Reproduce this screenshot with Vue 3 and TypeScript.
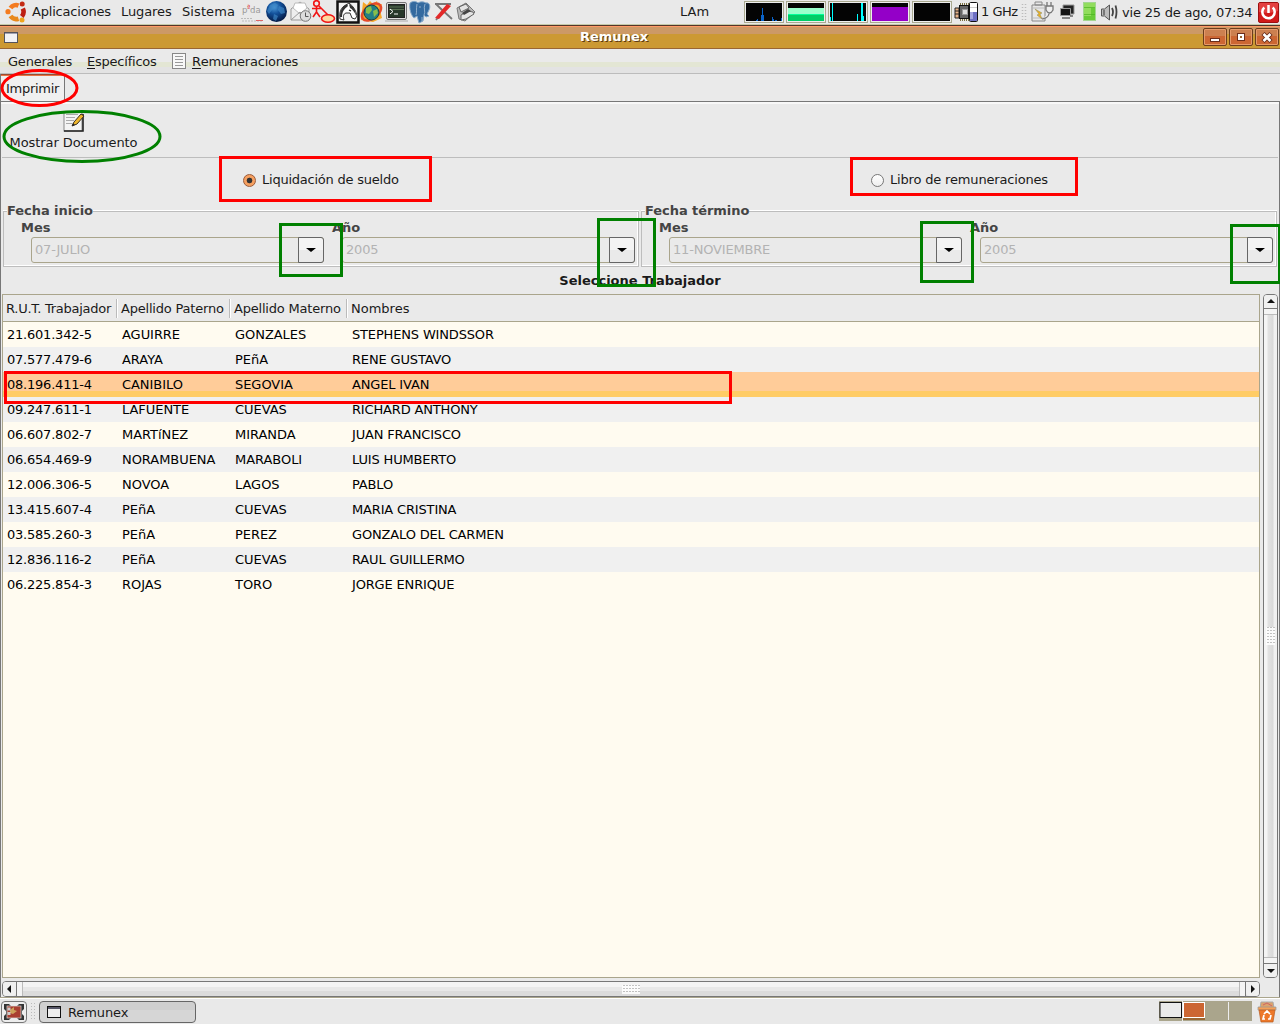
<script setup lang="ts">
interface Worker {
  rut: string
  paterno: string
  materno: string
  nombres: string
}

const workers: Worker[] = [
  { rut: '21.601.342-5', paterno: 'AGUIRRE', materno: 'GONZALES', nombres: 'STEPHENS WINDSSOR' },
  { rut: '07.577.479-6', paterno: 'ARAYA', materno: 'PEñA', nombres: 'RENE GUSTAVO' },
  { rut: '08.196.411-4', paterno: 'CANIBILO', materno: 'SEGOVIA', nombres: 'ANGEL IVAN' },
  { rut: '09.247.611-1', paterno: 'LAFUENTE', materno: 'CUEVAS', nombres: 'RICHARD ANTHONY' },
  { rut: '06.607.802-7', paterno: 'MARTíNEZ', materno: 'MIRANDA', nombres: 'JUAN FRANCISCO' },
  { rut: '06.654.469-9', paterno: 'NORAMBUENA', materno: 'MARABOLI', nombres: 'LUIS HUMBERTO' },
  { rut: '12.006.306-5', paterno: 'NOVOA', materno: 'LAGOS', nombres: 'PABLO' },
  { rut: '13.415.607-4', paterno: 'PEñA', materno: 'CUEVAS', nombres: 'MARIA CRISTINA' },
  { rut: '03.585.260-3', paterno: 'PEñA', materno: 'PEREZ', nombres: 'GONZALO DEL CARMEN' },
  { rut: '12.836.116-2', paterno: 'PEñA', materno: 'CUEVAS', nombres: 'RAUL GUILLERMO' },
  { rut: '06.225.854-3', paterno: 'ROJAS', materno: 'TORO', nombres: 'JORGE ENRIQUE' },
]

const selectedRut = '08.196.411-4'

const periods = [
  { title: 'Fecha inicio', month: '07-JULIO', year: '2005' },
  { title: 'Fecha término', month: '11-NOVIEMBRE', year: '2005' },
]
</script>

<template>
  <div class="desktop">
    <header class="panel top-panel">
      <svg class="ubuntu" width="22" height="24" viewBox="0 0 22 24">
        <g fill="none" stroke-width="4.600">
          <path d="M5.500 8A6.800 6.800 0 0 1 13.500 5.600" stroke="#f47b20" />
          <path d="M17.800 8.500A7.500 7.500 0 0 1 16.800 16.500" stroke="#bd2013" />
          <path d="M13.500 18.700A7.200 7.200 0 0 1 5.500 16" stroke="#e8891c" />
        </g>
        <circle cx="3" cy="11.700" r="2.600" fill="#f47b20" />
        <circle cx="17.200" cy="4" r="2.500" fill="#c42b14" />
        <circle cx="17" cy="20" r="2.500" fill="#eea51d" />
      </svg>
      <span class="m-app">Aplicaciones</span>
      <span class="m-lug">Lugares</span>
      <span class="m-sis">Sistema</span>
      <svg class="launchers" width="240" height="24" viewBox="240 0 240 24">
        <defs>
          <radialGradient id="globe" cx=".4" cy=".3" r=".7">
            <stop offset="0" stop-color="#4d9ad8" /><stop offset=".45" stop-color="#12509a" /><stop offset="1" stop-color="#051b46" />
          </radialGradient>
        </defs>
        <text x="242" y="13" font-size="8.500" fill="#999">p</text>
        <text x="247" y="10" font-size="7" fill="#d33">ª</text>
        <text x="250" y="13" font-size="8.500" fill="#999">da</text>
        <path d="M241 18.500h12M242 21h20" stroke="#bbb" stroke-dasharray="2 1" />
        <path d="M256 20.500h7" stroke="#d66" />
        <circle cx="276.500" cy="11.500" r="10.500" fill="url(#globe)" />
        <path d="M270 5l5-2 3 2-2 3-4 2-3 4-2-3zM279 6l5 2 1 5-4 1-3-4zM274 14l4 2-2 5-3-2z" fill="#3f89c8" opacity=".65" />
        <path d="M291 9l9-7 9 7v11h-18z" fill="#eee" stroke="#999" />
        <path d="M293 8l2-5h10l2 5-7 6z" fill="#fff" stroke="#bbb" />
        <path d="M291 20l9-8 9 8" fill="none" stroke="#999" />
        <circle cx="305.500" cy="16" r="5.300" fill="#ddd" stroke="#777" />
        <path d="M305.500 12.500v4h3" fill="none" stroke="#555" />
        <g fill="none" stroke="#f01414" stroke-width="1.600">
          <circle cx="316.500" cy="3.500" r="2.800" />
          <path d="M312 8.500h9M316.500 6v6M316.500 12l-3.500 5M316.500 12l3.500 5M319 6l9 9" />
          <ellipse cx="328" cy="18.500" rx="6.500" ry="3.700" fill="#fdd9a0" />
        </g>
        <path d="M337.500 1.500h21v21h-21z" fill="#f2f2f2" stroke="#111" stroke-width="2.500" />
        <path d="M340 19c-1-7 1-12 6-14l3-2c4 3 7 7 8 13l-2 3-3-1-2-5-4 0c-3 1-3 4-2 7z" fill="#fff" stroke="#333" />
        <path d="M340 17c0-6 2-11 7-13l1 2c-4 3-6 6-6 11zM349 4c4 2 7 6 7 12-1-4-4-7-6-8z" fill="#333" />
        <path d="M349 10l2 1" stroke="#111" stroke-width="1.300" />
        <path d="M361 20l2-18 4 3 3-4 3 3 4-3 1 4 4-1-2 6 2 8-9 4z" fill="#f6a82a" />
        <ellipse cx="371.500" cy="12" rx="11" ry="6.500" fill="none" stroke="#e64a2c" stroke-width="2.500" transform="rotate(-38 371.500 12)" />
        <circle cx="371.500" cy="12.500" r="7.500" fill="#247f85" stroke="#143f3f" />
        <path d="M366 8l5-2 1 4-3 4-3-1zM373 11l4-2 1 4-4 4z" fill="#85be4c" />
        <rect x="386.500" y="2.500" width="20" height="17" rx="1.500" fill="#ddd" stroke="#777" />
        <rect x="388.500" y="4.500" width="16" height="13" fill="#27372a" stroke="#222" />
        <path d="M389 7h15M389 9.500h15" stroke="#5b7254" />
        <path d="M390 9l3 2.500-3 2.500M394 14h4" stroke="#fff" fill="none" />
        <path d="M385 21h23" stroke="#aaa" />
        <path d="M410 3c4-3 7-1 8 0 3-2 6-1 8 0 3-1 5 3 3 7l-2 4 2 2-3 1-2-2-1 6-4 2-2-7-3 2c-3-3-5-9-4-15z" fill="#346a9f" stroke="#86a9ca" />
        <path d="M417 4c-1 5 0 8-1 11M425 4c-2 5 1 7-1 11M419 7h2M422 17v4" stroke="#a7c0d8" fill="none" stroke-width=".8" />
        <path d="M435 4h16M439 7l13 12M447 7l-11 13M436 4l6 6" stroke="#777" fill="none" stroke-width="1.800" />
        <path d="M435 18l12-14 4 2-12 13z" fill="#e32828" />
        <path d="M457 8l9-5 9 9-10 9-6-2z" fill="#bbb" stroke="#777" />
        <path d="M459 7l7-3 3 4-8 4zM461 15l7-4 5 1 1 2-8 5-5 1z" fill="#e4e4e4" stroke="#666" />
        <path d="M462 13l6-4 3 2-7 4z" fill="#444" />
      </svg>
      <span class="m-lam">LAm</span>
      <svg class="monitors" width="236" height="24" viewBox="744 0 236 24">
        <g fill="#040404" stroke="#a9a98f">
          <rect x="744.500" y="1.500" width="39" height="21" /><rect x="786.500" y="1.500" width="39" height="21" />
          <rect x="828.500" y="1.500" width="39" height="21" /><rect x="870.500" y="1.500" width="39" height="21" />
          <rect x="912.500" y="1.500" width="39" height="21" />
        </g>
        <g fill="none" stroke="#eee">
          <rect x="745.500" y="2.500" width="37" height="19" /><rect x="787.500" y="2.500" width="37" height="19" />
          <rect x="829.500" y="2.500" width="37" height="19" /><rect x="871.500" y="2.500" width="37" height="19" />
          <rect x="913.500" y="2.500" width="37" height="19" />
        </g>
        <path d="M756 21v-1h1v-1h1v2zM761 21v-6h1v-7h1v7h1v6zM772 21v-4h1v2h1v2zM775 21v-1h2v1zM781 21v-3h1v3z" fill="#0a63c9" />
        <path d="M788 8h36v6h-36z" fill="#99ffcc" /><path d="M788 14h36v1h-36z" fill="#00ff99" /><path d="M788 15h36v6h-36z" fill="#00cc66" />
        <path d="M830 17h1v4h-1zM832 3h1v18h-1zM857 14h1v7h-1zM861 3h2v18h-2zM863 16h1v5h-1z" fill="#0ff" />
        <path d="M872 7h36v14h-36z" fill="#9400c8" />
        <path d="M955 8h4v10h-4z" fill="#e9b48a" stroke="#222" /><path d="M955 11h4M955 14h4" stroke="#222" />
        <rect x="959.500" y="5.500" width="9" height="13" fill="#666" stroke="#111" />
        <path d="M960 4h9M960 20h9" stroke="#7a6f40" stroke-width="2" stroke-dasharray="1 1" />
        <rect x="962.500" y="9.500" width="5" height="5" fill="#ddd" stroke="#999" />
        <rect x="969.500" y="2.500" width="8" height="19" rx="1" fill="#fff" stroke="#111" />
        <path d="M970 12h7v9h-7z" fill="#6e70c4" /><path d="M970 12h3v7h-3z" fill="#a4a5df" /><path d="M970 7.500h7" stroke="#ccc" />
      </svg>
      <span class="m-ghz">1 GHz</span>
      <svg class="tray" width="98" height="24" viewBox="1020 0 98 24">
        <path d="M1022.500 4v17M1025.500 4v17" stroke="#bbb" stroke-dasharray="1 2" stroke-width="1.500" />
        <path d="M1032 5h13v16h-13zM1035 2h7v3h-7z" fill="#e7e7e7" stroke="#888" />
        <path d="M1033 8h11M1033 18h11" stroke="#bbb" /><path d="M1035 9l4 5-2 1 5 4-2-5 2-1z" fill="#edb222" stroke="#886" stroke-width=".5" />
        <path d="M1046 6h7v4c-2 4-5 4-7 0zM1047 6V2M1051 6V2M1049 13c0 5-4 5-7 6" fill="#eee" stroke="#777" stroke-width="1.300" />
        <path d="M1063 5h11v9h-11z" fill="#222" stroke="#999" /><path d="M1060.500 8.500h10v7h-10z" fill="#151515" stroke="#999" /><path d="M1062 18h8M1070 16h3" stroke="#666" stroke-width="1.500" />
        <rect x="1083.500" y="2.500" width="12" height="18" fill="#68cb38" stroke="#a2d690" />
        <path d="M1084 16h7V8h4V3h-11z" fill="#91dd5d" /><path d="M1084 7.500h11M1084 14.500h11" stroke="#4bb420" stroke-width=".7" />
        <path d="M1101.500 9h3l5-4v15l-5-4h-3z" fill="#bbb" stroke="#555" />
        <path d="M1104 10v5" stroke="#333" /><path d="M1112 8q2 4 0 8M1115.500 5.500q2 6.500 0 13" fill="none" stroke="#444" stroke-width="1.800" />
      </svg>
      <span class="m-clock">vie 25 de ago, 07:34</span>
      <svg class="power" width="21" height="21" viewBox="0 0 21 21">
        <rect x=".5" y=".5" width="20" height="20" rx="1.500" fill="#d11919" stroke="#9c1010" />
        <path d="M1 1h19v8q-9 3-19 1z" fill="#ef5a5a" opacity=".6" />
        <path d="M6.300 5.500a6.200 6.200 0 1 0 8.400 0M10.500 3v8" fill="none" stroke="#fff" stroke-width="2.500" />
      </svg>
    </header>

    <div class="titlebar">
      <svg class="win-icon" width="16" height="12" viewBox="0 0 16 12">
        <rect x=".5" y=".5" width="13" height="10" fill="#f2f2f5" stroke="#54545c" /><path d="M1 1.500h12" stroke="#a0a0b0" />
      </svg>
      <span class="title">Remunex</span>
      <span class="win-btn"><svg width="22" height="16"><path d="M6 9h10v4H6z" fill="#6b2d1b" /><path d="M7 10h8v2H7z" fill="#fff" /></svg></span>
      <span class="win-btn"><svg width="22" height="16"><path d="M7 4h8v8H7z" fill="#6b2d1b" /><path d="M8 5h6v6H8z" fill="#fff" /><path d="M10 7h2v2h-2z" fill="#963" /></svg></span>
      <span class="win-btn"><svg width="22" height="16"><path d="M7 4.500l8 8M15 4.500l-8 8" stroke="#6b2d1b" stroke-width="4.500" /><path d="M7.500 5l7 7M14.500 5l-7 7" stroke="#fff" stroke-width="2.600" /></svg></span>
    </div>

    <nav class="menubar">
      <span class="n-gen">Generales</span>
      <span class="n-esp"><u>E</u>specíficos</span>
      <svg class="doc" width="14" height="16" viewBox="0 0 14 16"><rect x=".5" y=".5" width="13" height="15" fill="#f8f8f8" stroke="#888" /><path d="M3 3.500h8M3 6.500h8M3 9.500h8M3 12.500h8" stroke="#999" /></svg>
      <span class="n-rem"><u>R</u>emuneraciones</span>
    </nav>

    <div class="tabs"><div class="tab">Imprimir</div></div>

    <main class="window">
      <div class="toolbar">
        <div class="tool">
          <svg width="22" height="22" viewBox="0 0 22 22">
            <rect x="1" y="1" width="18" height="19" fill="#f4f4f4" stroke="#888" /><path d="M1 20h19V3" fill="none" stroke="#222" stroke-width="1.600" />
            <path d="M3 3.500h12M3 6.500h9M3 9.500h8M3 12.500h6" stroke="#aaa" />
            <path d="M9 15l2-4 7-8 3 2-7 8z" fill="#f0b72c" stroke="#3b3020" /><path d="M9 15l1-3 2 2z" fill="#222" />
          </svg>
          <span>Mostrar Documento</span>
        </div>
      </div>

      <div class="radios">
        <label class="radio"><i class="dot on"></i><span class="r-liq">Liquidación de sueldo</span></label>
        <label class="radio"><i class="dot"></i><span class="r-lib">Libro de remuneraciones</span></label>
      </div>

      <div class="periods">
        <fieldset v-for="p in periods" :key="p.title" class="period">
          <legend>{{ p.title }}</legend>
          <div class="fields">
            <div class="field">
              <b>Mes</b>
              <div class="combo"><span>{{ p.month }}</span><i class="arrow"></i></div>
            </div>
            <div class="field">
              <b>Año</b>
              <div class="combo"><span>{{ p.year }}</span><i class="arrow"></i></div>
            </div>
          </div>
        </fieldset>
      </div>

      <h1 class="caption">Seleccione Trabajador</h1>

      <div class="list-area">
        <div class="table">
          <div class="row head">
            <span class="c1">R.U.T. Trabajador</span><span class="c2">Apellido Paterno</span><span class="c3">Apellido Materno</span><span class="c4">Nombres</span>
          </div>
          <div v-for="w in workers" :key="w.rut" class="row" :class="{ selected: w.rut === selectedRut }">
            <span class="c1">{{ w.rut }}</span><span class="c2">{{ w.paterno }}</span><span class="c3">{{ w.materno }}</span><span class="c4">{{ w.nombres }}</span>
          </div>
        </div>
        <div class="vscroll">
          <div class="step"><svg width="14" height="13"><path d="M3 8h8l-4-4z" fill="#111" /></svg></div>
          <div class="thumb"><i class="grip"></i></div>
          <div class="step"><svg width="14" height="13"><path d="M3 5h8l-4 4z" fill="#111" /></svg></div>
        </div>
      </div>

      <div class="hscroll">
        <div class="step"><svg width="13" height="14"><path d="M8 3v8l-4-4z" fill="#111" /></svg></div>
        <div class="thumb"><i class="grip"></i></div>
        <div class="step"><svg width="13" height="14"><path d="M5 3v8l4-4z" fill="#111" /></svg></div>
      </div>
    </main>

    <footer class="panel bottom-panel">
      <div class="show-desktop">
        <svg width="22" height="18" viewBox="0 0 22 18"><path d="M1 1h5l2 2h6l2-2h5v5l-2 2v3l2 2v4h-5l-2-2H8l-2 2H1v-4l2-2V8L1 6z" fill="#333" /><rect x="4" y="3" width="14" height="12" fill="#a93f31" stroke="#ddd" stroke-width=".7" /><path d="M7 7l4-3v3l3 1-4 3-3-1z" fill="#cda15a" /><path d="M4.500 4.500h3v3h-3zM4.500 9h3v3h-3z" fill="#ccc" /></svg>
      </div>
      <svg class="handle" width="6" height="18"><path d="M1.500 0v18M4.500 0v18" stroke="#bbb" stroke-dasharray="1 2" /></svg>
      <div class="task">
        <svg width="14" height="12"><rect x=".5" y=".5" width="13" height="11" fill="#eee" stroke="#111" /><path d="M1 2h12" stroke="#556" stroke-width="2" /></svg>
        <span>Remunex</span>
      </div>
      <svg class="pager" width="93" height="20" viewBox="0 0 93 20">
        <path d="M0 0h93v20H0z" fill="#aaa58c" />
        <rect x="1" y="1.500" width="21.500" height="15" fill="#eaeaea" stroke="#111" />
        <path d="M23.500 0v20M69.500 1v18" stroke="#eee" />
        <path d="M24 17h22v2H24z" fill="#963" /><rect x="24.500" y="1.500" width="21" height="15" fill="#c63" stroke="#fff" />
      </svg>
      <svg class="trash" width="20" height="22" viewBox="0 0 20 22">
        <path d="M3 7l1-6h12l1 6z" fill="#dda26b" stroke="#aaa" /><path d="M6 4l4-2 5 3" stroke="#c66" fill="none" />
        <path d="M1 6h18v3H1z" fill="#f5a057" stroke="#999" stroke-width=".7" /><path d="M2 9h16l-2 12H4z" fill="#ed782a" stroke="#b75c20" stroke-width=".7" />
        <path d="M7 13l3-3 3 3M14 14l-1 4h-2M8 18H6l1-4" fill="none" stroke="#fff" stroke-width="1.700" />
      </svg>
    </footer>

    <svg class="marks" width="1280" height="1024" viewBox="0 0 1280 1024" fill="none" stroke-width="3">
      <g stroke="#f00">
        <ellipse cx="39.500" cy="88" rx="37.500" ry="17.500" />
        <rect x="220.500" y="157.500" width="210" height="43" />
        <rect x="851.500" y="158.500" width="225" height="36" />
        <rect x="5.500" y="372.500" width="725" height="30" />
      </g>
      <g stroke="#008000">
        <ellipse cx="82" cy="136.500" rx="78" ry="25" />
        <rect x="280.500" y="224.500" width="61" height="51" />
        <rect x="598.500" y="219.500" width="56" height="66" />
        <rect x="921.500" y="222.500" width="51" height="59" />
        <rect x="1231.500" y="225.500" width="48" height="57" />
      </g>
    </svg>
  </div>
</template>

<style>
body { margin: 0; }
</style>

<style scoped>
* { box-sizing: border-box; }
.desktop {
  position: relative; width: 1280px; height: 1024px; overflow: hidden;
  display: flex; flex-direction: column; background: #eaeaea; color: #1a1a1a;
  font: 13px/16px "DejaVu Sans", sans-serif; white-space: nowrap;
}
svg { display: block; flex: none; }
u { text-decoration: none; border-bottom: 1px solid #1a1a1a; display: inline-block; line-height: 13px; }
.panel { display: flex; flex: none; }
.top-panel { height: 25px; border-bottom: 1px solid #c5c9a8; align-items: center; background: #e9e9e9; }
.ubuntu { margin-left: 5px; }
.m-app { margin-left: 5px; width: 89px; letter-spacing: -.2px; }
.m-lug { width: 61px; letter-spacing: -.1px; }
.m-sis { width: 58px; letter-spacing: .08px; }
.m-lam { margin-left: 200px; width: 64px; }
.m-ghz { margin-left: 1px; width: 39px; letter-spacing: -.5px; }
.m-clock { margin-left: 4px; width: 136px; padding-top: 1px; letter-spacing: -.2px; }

.titlebar {
  height: 24px; flex: none; display: flex; align-items: center; padding: 0 1px 0 4px;
  background: linear-gradient(#543528 0 1px, #ff9966 1px 2px, #cc9966 2px 9px, #cc9933 9px 23px, #996633 23px);
}
.win-icon { margin: 2px auto 0 0; }
.title { width: 70px; margin-right: 551px; font-weight: bold; color: #fff; text-shadow: 1px 1px #5c3a14; }
.win-btn {
  width: 24px; height: 18px; margin-left: 2px; border: 1px solid #6b3d1c; border-radius: 2px;
  background: linear-gradient(#ff9966 0 1px, #cc8050 1px 7px, #cc6633 7px); box-shadow: inset 0 0 0 1px #e59a6b;
}

.menubar {
  height: 25px; flex: none; display: flex; align-items: center; padding-left: 8px; border-bottom: 1px solid #bcbcbc;
  background: linear-gradient(#eaeaea 0 13px, #e3e6d4 13px 18px, #e3e3e3 18px);
}
.menubar span { padding-top: 2px; letter-spacing: -.22px; }
.n-gen { width: 79px; }
.n-esp { width: 85px; }
.doc { margin-right: 6px; }

.tabs { height: 27px; flex: none; border-left: 1px solid #777; }
.tab {
  width: 64px; height: 27px; padding: 6px 0 0 5px; border-right: 1px solid #777; border-top: 1px solid #9b4a30;
  background: linear-gradient(#e77243 0 1px, #f0f0f0 1px); letter-spacing: -.28px;
}

.window {
  flex: 1; min-height: 0; display: flex; flex-direction: column; padding: 0 1px 0 1px; border: 1px solid #777;
  box-shadow: inset 0 2px #f8f8f8;
}
.toolbar { height: 56px; flex: none; border-bottom: 1px solid #bdbdbd; padding: 9px 0 0 7px; }
.tool { width: 129px; display: flex; flex-direction: column; align-items: center; gap: 2px; letter-spacing: -.07px; }
.radios { height: 46px; flex: none; display: flex; }
.radio { display: flex; height: 45px; align-items: center; width: 628px; padding-left: 241px; }
.radio span { padding-bottom: 2px; }
.r-liq { letter-spacing: -.23px; }
.r-lib { letter-spacing: -.17px; }
.dot { width: 13px; height: 13px; border: 1px solid #777; border-radius: 50%; margin-right: 6px; background: linear-gradient(#fff, #eee); }
.dot.on { border-color: #9a5a38; background: radial-gradient(circle, #333 0 2.5px, #f6a060 3.2px); }

.periods { height: 63px; flex: none; display: flex; gap: 2px; padding-left: 1px; }
.period {
  width: 636px; min-width: 0; height: 63px; margin: 0; padding: 0 0 0 17px;
  border: 1px solid #bdbdbd; box-shadow: 0 -1px #fff, inset -1px -1px #fff; color: #444;
}
legend { margin-left: -14px; padding: 0; height: 15px; line-height: 14px; font-weight: bold; letter-spacing: -.06px; background: #eaeaea; }
.fields { display: flex; }
.field { width: 311px; flex: none; }
.field b { display: block; line-height: 16px; margin-top: 1px; }
.combo {
  margin: 1px 0 0 10px; width: 293px; height: 26px; border: 1px solid #aaa58c; border-radius: 3px;
  display: flex; align-items: center; justify-content: space-between; padding-left: 3px; color: #b3b3b3;
}
.combo span { letter-spacing: -.18px; }
.arrow {
  width: 26px; height: 26px; margin-right: -1px; border: 1px solid #666; border-radius: 0 3px 3px 0; display: flex;
  background: linear-gradient(#f4f4f4 0 50%, #eaeaea 50%);
}
.arrow::before { content: ""; margin: auto; border: 5px solid transparent; border-top: 4px solid #000; border-bottom: 0; }
.caption { height: 27px; flex: none; margin: 0; font-size: 13px; line-height: 28px; text-align: center; }

.list-area { flex: 1; min-height: 0; display: flex; justify-content: space-between; }
.table { width: 1258px; border: 1px solid #aaa58c; background: #fffbf0; }
.row { height: 25px; display: flex; align-items: center; color: #000; }
.row:nth-child(odd) { background: #f0f0f0; }
.row:nth-child(odd).selected, .row.selected { background: linear-gradient(#ffcc99 0 19px, #ffcc66 19px); }
.c1 { width: 115px; padding-left: 4px; letter-spacing: -.22px; }
.c2 { width: 113px; padding-left: 4px; letter-spacing: -.05px; }
.c3 { width: 117px; padding-left: 4px; letter-spacing: -.05px; }
.c4 { padding-left: 4px; letter-spacing: -.16px; }
.row.row.head { height: 27px; background: #eaeaea; border-bottom: 1px solid #aaa58c; color: #1a1a1a; align-items: stretch; padding: 4px 0 3px; }
.head span { line-height: 19px; padding-left: 3px; letter-spacing: -.2px; }
.head .c1 { width: 114px; border-right: 1px solid #bbb; letter-spacing: -.28px; }
.head .c2, .head .c3 { border-right: 1px solid #bbb; border-left: 1px solid #fff; }
.head .c4 { border-left: 1px solid #fff; letter-spacing: 0; }

.vscroll, .hscroll { display: flex; flex: none; border: 1px solid #777; border-radius: 4px; }
.vscroll { width: 15px; flex-direction: column; background: linear-gradient(90deg, #f4f4f4 0 3px, #e2e2e2 4px, #d9d9d9 9px, #f0f0f0 10px); }
.hscroll { width: 1258px; height: 16px; margin: 3px 0 0; background: linear-gradient(#f4f4f4 0 5px, #e8e8e8 5px 9px, #dcdcdc 9px); }
.step { flex: none; background: #f0f0f0; border-radius: 3px; overflow: hidden; }
.vscroll .step { height: 13px; }
.hscroll .step { width: 13px; }
.thumb { flex: 1; display: flex; align-items: center; justify-content: center; }
.vscroll .thumb { border: solid #777; border-width: 1px 0; box-shadow: inset 0 5px #f4f4f4, inset 0 6px #bbb, inset 0 -5px #f4f4f4, inset 0 -6px #bbb; }
.hscroll .thumb { border: solid #777; border-width: 0 1px; box-shadow: inset 5px 0 #f4f4f4, inset 6px 0 #bbb, inset -5px 0 #f4f4f4, inset -6px 0 #bbb; }
.grip { width: 9px; height: 18px; background: conic-gradient(from 90deg at 1px 1px, #fff 0 25%, #fff 0 75%, #bbb 0) 0 0 / 3px 3px; opacity: .85; }
.hscroll .grip { width: 18px; height: 9px; }

.bottom-panel { height: 26px; border-top: 1px solid #fff; box-shadow: 0 -1px #aaa58c; align-items: center; background: #e9e9e9; }
.show-desktop { width: 26px; height: 22px; margin-left: 1px; border: 1px solid #777; border-radius: 4px; background: #ededed; padding: 1px; }
.handle { margin-left: 3px; }
.task {
  width: 157px; height: 22px; margin-left: 3px; padding-left: 7px; border: 1px solid #666; border-radius: 4px; display: flex; align-items: center;
  background: linear-gradient(#cfcfcf 0 8px, #d6d6d6 8px); gap: 7px; letter-spacing: -.1px;
}
.task span { padding-top: 2px; }
.pager { margin: -1px 0 0 auto; }
.trash { margin: 0 3px 0 5px; }
.marks { position: absolute; left: 0; top: 0; pointer-events: none; }
</style>
